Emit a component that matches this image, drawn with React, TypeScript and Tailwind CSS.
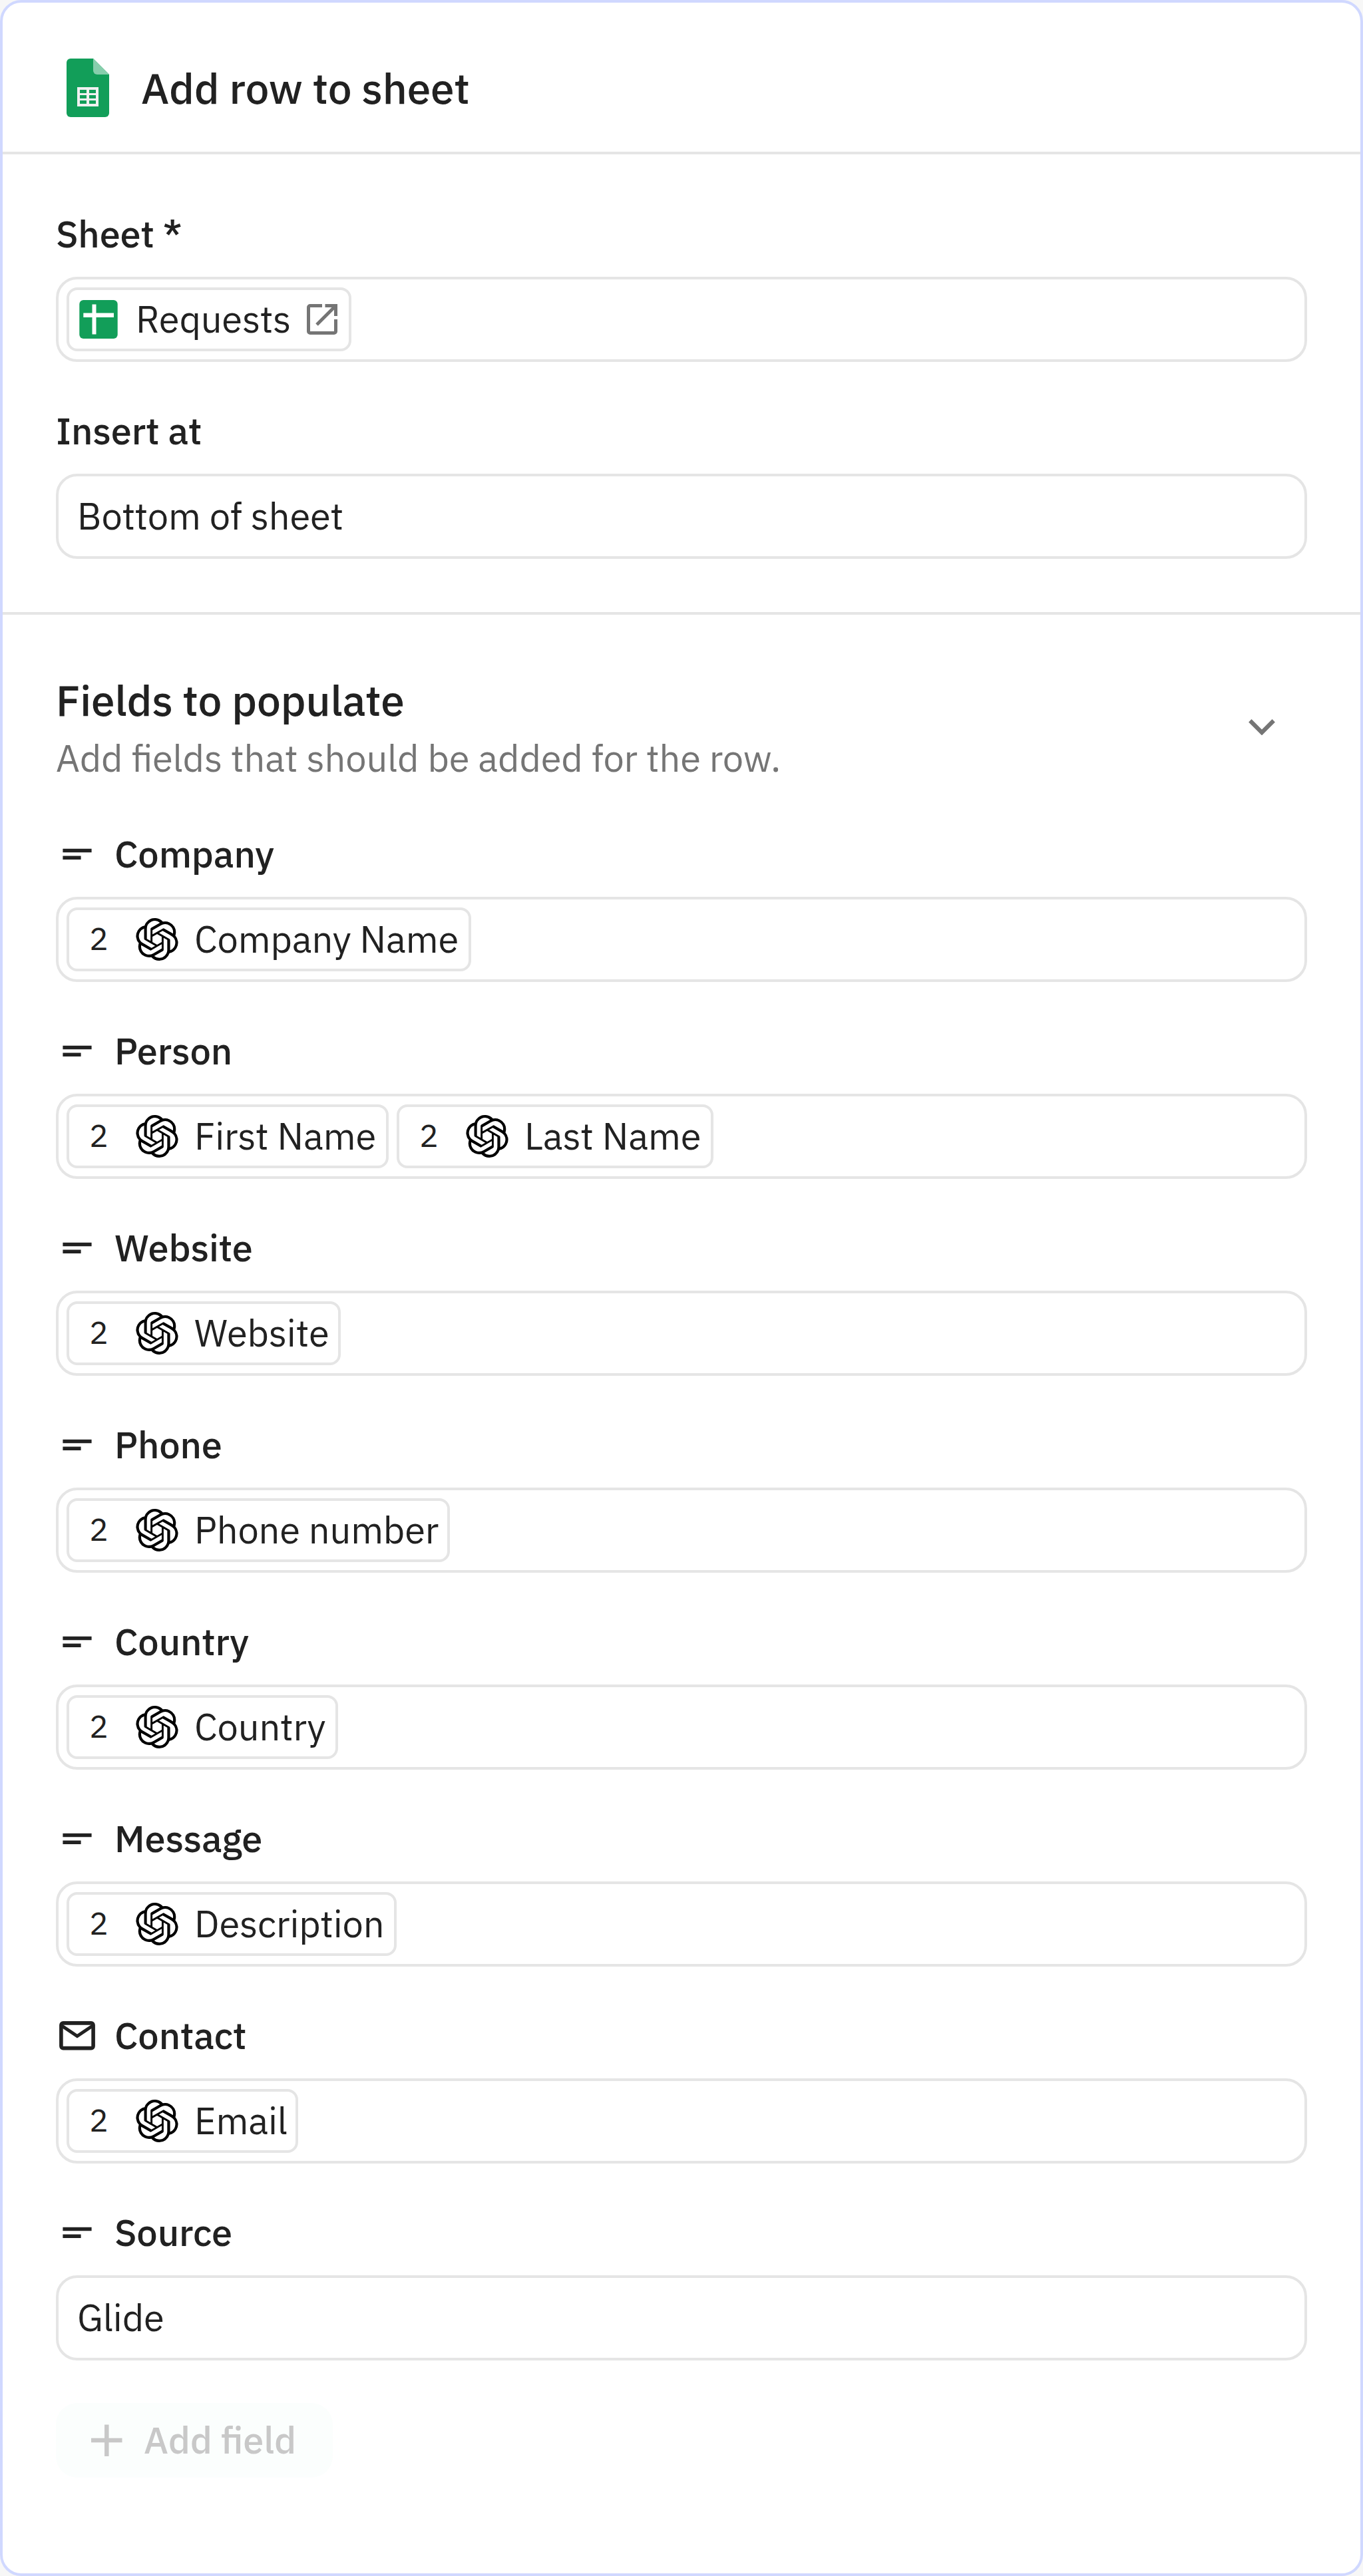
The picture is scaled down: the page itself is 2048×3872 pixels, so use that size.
import React from 'react';
import { SiOpenai } from 'react-icons/si';

type Token = { label: string; width: string };

type Field = {
  name: string;
  icon?: 'text' | 'mail';
  tokens?: Token[];
  value?: string;
};

const fields: Field[] = [
  { name: 'Company', tokens: [{ label: 'Company Name', width: 'w-[608px]' }] },
  {
    name: 'Person',
    tokens: [
      { label: 'First Name', width: 'w-[484px]' },
      { label: 'Last Name', width: 'w-[476px]' },
    ],
  },
  { name: 'Website', tokens: [{ label: 'Website', width: 'w-[412px]' }] },
  { name: 'Phone', tokens: [{ label: 'Phone number', width: 'w-[576px]' }] },
  { name: 'Country', tokens: [{ label: 'Country', width: 'w-[408px]' }] },
  { name: 'Message', tokens: [{ label: 'Description', width: 'w-[496px]' }] },
  {
    name: 'Contact',
    icon: 'mail',
    tokens: [{ label: 'Email', width: 'w-[348px]' }],
  },
  { name: 'Source', value: 'Glide' },
];

const SheetsFileIcon = (): JSX.Element => (
  <svg className="w-16 h-[88px] shrink-0" viewBox="0 0 64 88">
    <path
      d="M6 0h34l24 24v58a6 6 0 0 1-6 6H6a6 6 0 0 1-6-6V6a6 6 0 0 1 6-6z"
      fill="#129e59"
    />
    <path d="M40 0l24 24H46a6 6 0 0 1-6-6z" fill="#87ceac" />
    <path
      d="M16 43h32v29H16zM20 47v5h10v-5zM34 47v5h10v-5zM20 55v5h10v-5zM34 55v5h10v-5zM20 63v5h10v-5zM34 63v5h10v-5z"
      fill="#f1f1f1"
      fillRule="evenodd"
    />
  </svg>
);

const SheetIcon = (): JSX.Element => (
  <svg className="size-16 shrink-0" viewBox="0 0 64 64">
    <rect x="3.3" y="3" width="57.4" height="58" rx="6" fill="#129e59" />
    <path d="M22.5 9.5h6v45h-6zM9.3 22.5H55v6.5H9.3z" fill="#fff" />
  </svg>
);

const OpenIcon = (): JSX.Element => (
  <svg className="size-14 shrink-0" viewBox="0 0 56 56">
    <path
      d="M28 7.5H10a2.5 2.5 0 0 0-2.5 2.5v36a2.5 2.5 0 0 0 2.5 2.5h36a2.5 2.5 0 0 0 2.5-2.5V28M32.5 7.5h16V23M48 8L20 36"
      fill="none"
      stroke="#757575"
      strokeWidth="5"
    />
  </svg>
);

const TextIcon = (): JSX.Element => (
  <svg className="size-16 shrink-0" viewBox="0 0 64 64">
    <path
      d="M10.4 23.7h43.2v5.6H10.4zM10.4 34.5h27.2V40H10.4z"
      fill="#212121"
    />
  </svg>
);

const MailIcon = (): JSX.Element => (
  <svg className="size-16 shrink-0" viewBox="0 0 64 64">
    <rect
      x="7.9"
      y="12.9"
      width="48.2"
      height="37.7"
      rx="3"
      fill="none"
      stroke="#212121"
      strokeWidth="5.6"
    />
    <path
      d="M9 17l23 15.5L55 17"
      fill="none"
      stroke="#212121"
      strokeWidth="5"
    />
  </svg>
);

const Chip = ({ label, width }: Token): JSX.Element => (
  <div
    className={`${width} h-24 shrink-0 flex items-center border-4 border-[#e5e5e5] rounded-2xl pl-[30px]`}
  >
    <span className="w-[70px] pb-1 text-5xl leading-[80px]">2</span>
    <SiOpenai className="size-16 shrink-0 text-black" />
    <span className="ml-6 pb-0.5 whitespace-nowrap">{label}</span>
  </div>
);

const Input = ({ children }: { children: React.ReactNode }): JSX.Element => (
  <div className="h-32 flex items-center gap-3 border-4 border-[#e5e5e5] rounded-[32px] px-3">
    {children}
  </div>
);

const App = (): JSX.Element => {
  return (
    <div className="w-[2048px] h-[3872px] bg-[#f7f7f7]">
      {/* tracking turns ligatures off, so "fi" is switched back on */}
      <div className="h-full flex flex-col bg-white border-4 border-[#d0d8ff] rounded-[32px] font-['IBM_Plex_Sans','Roboto',sans-serif] text-[56px] leading-[80px] tracking-[-0.17px] [font-feature-settings:'liga'_1] text-[#212121]">
        <div className="h-[228px] flex items-center border-b-4 border-[#e5e5e5] pl-24 pt-8">
          <SheetsFileIcon />
          <h1 className="ml-12 text-[64px] font-medium">Add row to sheet</h1>
        </div>

        <div className="h-[692px] border-b-4 border-[#e5e5e5] px-20 pt-20">
          <div className="h-[104px] leading-[78px] font-medium">Sheet *</div>
          <Input>
            <div className="w-[428px] h-24 flex items-center border-4 border-[#e5e5e5] rounded-2xl pl-3">
              <SheetIcon />
              <span className="ml-6 pb-0.5">Requests</span>
              <span className="ml-auto mr-3">
                <OpenIcon />
              </span>
            </div>
          </Input>
          <div className="h-[168px] pt-16 leading-[78px] font-medium">
            Insert at
          </div>
          <Input>
            <span className="pl-4 pb-0.5">Bottom of sheet</span>
          </Input>
        </div>

        <div className="px-20 pt-[84px]">
          <div className="flex items-center justify-between h-[172px]">
            <div>
              <h2 className="text-[64px] leading-[88px] font-medium">
                Fields to populate
              </h2>
              <p className="leading-[86px] -mb-0.5 text-[#757575]">
                Add fields that should be added for the row.
              </p>
            </div>
            <svg className="w-10 h-6 mr-12 mb-0.5" viewBox="0 0 40 24">
              <path
                d="M2.3 2.3L20 20 37.7 2.3"
                fill="none"
                stroke="#757575"
                strokeWidth="6.2"
              />
            </svg>
          </div>

          {fields.map((field) => (
            <div key={field.name}>
              <div className="h-[168px] pt-16 flex items-start">
                <span className="h-20 flex items-center">
                  {field.icon === 'mail' ? <MailIcon /> : <TextIcon />}
                </span>
                <span className="ml-6 leading-[78px] font-medium">
                  {field.name}
                </span>
              </div>
              <Input>
                {field.tokens?.map((token) => (
                  <Chip key={token.label} {...token} />
                ))}
                {field.value && (
                  <span className="pl-4 pb-0.5">{field.value}</span>
                )}
              </Input>
            </div>
          ))}

          <button className="mt-16 w-[416px] h-28 flex items-center rounded-[32px] bg-[#fbfefd] pl-[52px] font-medium tracking-[-0.17px] text-[#c8c8c8]">
            <svg className="size-12" viewBox="0 0 48 48">
              <path
                d="M24.3 0.5V48M1 24h46.500"
                stroke="#c8c8c8"
                strokeWidth="6.5"
              />
            </svg>
            <span className="ml-8 pb-0.5">Add field</span>
          </button>
        </div>
      </div>
    </div>
  );
};

export default App;
